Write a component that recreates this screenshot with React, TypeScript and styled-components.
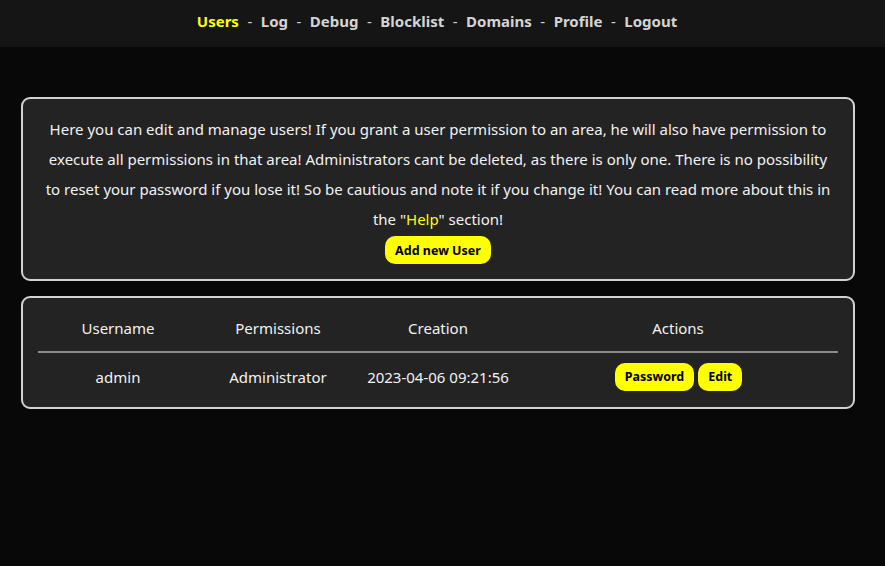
import React from "react";
import styled, { createGlobalStyle } from "styled-components";

const Global = createGlobalStyle`
  html, body { margin: 0; padding: 0; background: #080808; }
  body { font-family: "Noto Sans", "DejaVu Sans", sans-serif; color: #ffffff; }
  * { box-sizing: border-box; }
`;

const Page = styled.div`
  min-height: 566px;
  background: #080808;
`;

const Nav = styled.nav`
  height: 47px;
  background: #151515;
  display: flex;
  align-items: center;
  justify-content: center;
  padding: 0 11px 5px 0;
  font-weight: 700;
  font-size: 15px;
  color: #d0d0d0;
`;

const NavLink = styled.a<{ $active?: boolean }>`
  color: ${(p) => (p.$active ? "#ffff00" : "#d4d4d4")};
  text-decoration: none;
`;

const Sep = styled.span`
  color: #d4d4d4;
  font-weight: 400;
  margin: 0 8.5px;
`;

const Main = styled.main`
  padding: 50px 30px 0 21px;
  display: flex;
  flex-direction: column;
  gap: 15px;
`;

const Card = styled.section`
  background: #232323;
  border: 2px solid #d2d2d2;
  border-radius: 9px;
  width: 834px;
`;

const InfoCard = styled(Card)`
  padding: 15px 10px 15px;
  display: flex;
  flex-direction: column;
  align-items: center;
`;

const InfoText = styled.p`
  margin: 0;
  text-align: center;
  font-size: 15px;
  line-height: 30px;
  color: #f2f2f2;
  white-space: nowrap;
`;

const Help = styled.span`
  color: #ffff00;
`;

const YellowButton = styled.button`
  background: #ffff00;
  color: #000;
  border: none;
  border-radius: 10px;
  height: 28px;
  padding: 0 10px;
  font-family: inherit;
  font-weight: 700;
  font-size: 12.5px;
  cursor: pointer;
`;

const AddButton = styled(YellowButton)`
  margin-top: 2px;
`;

const TableCard = styled(Card)`
  padding: 6px 15px 8px;
`;

const Table = styled.table`
  width: 800px;
  border-collapse: collapse;
  table-layout: fixed;
  font-size: 15px;
  color: #f2f2f2;
`;

const Th = styled.th<{ $w: number }>`
  width: ${(p) => p.$w}px;
  font-weight: 400;
  height: 48px;
  padding: 0;
  border-bottom: 2px solid #8a8a8a;
  vertical-align: middle;
`;

const Td = styled.td`
  text-align: center;
  height: 47px;
  padding: 1px 0 0;
`;

const Actions = styled.div`
  display: flex;
  justify-content: center;
  gap: 4px;
  padding-left: 1px;
`;

export default function App() {
  const links = ["Users", "Log", "Debug", "Blocklist", "Domains", "Profile", "Logout"];
  return (
    <Page>
      <Global />
      <Nav>
        {links.map((l, i) => (
          <React.Fragment key={l}>
            {i > 0 && <Sep>-</Sep>}
            <NavLink href="#" $active={i === 0}>{l}</NavLink>
          </React.Fragment>
        ))}
      </Nav>
      <Main>
        <InfoCard>
          <InfoText>
            Here you can edit and manage users! If you grant a user permission to an area, he will also have permission to
            <br />
            execute all permissions in that area! Administrators cant be deleted, as there is only one. There is no possibility
            <br />
            to reset your password if you lose it! So be cautious and note it if you change it! You can read more about this in
            <br />
            the "<Help>Help</Help>" section!
          </InfoText>
          <AddButton>Add new User</AddButton>
        </InfoCard>
        <TableCard>
          <Table>
            <thead>
              <tr>
                <Th $w={160}>Username</Th>
                <Th $w={160}>Permissions</Th>
                <Th $w={160}>Creation</Th>
                <Th $w={320}>Actions</Th>
              </tr>
            </thead>
            <tbody>
              <tr>
                <Td>admin</Td>
                <Td>Administrator</Td>
                <Td>2023-04-06 09:21:56</Td>
                <Td>
                  <Actions>
                    <YellowButton>Password</YellowButton>
                    <YellowButton>Edit</YellowButton>
                  </Actions>
                </Td>
              </tr>
            </tbody>
          </Table>
        </TableCard>
      </Main>
    </Page>
  );
}
